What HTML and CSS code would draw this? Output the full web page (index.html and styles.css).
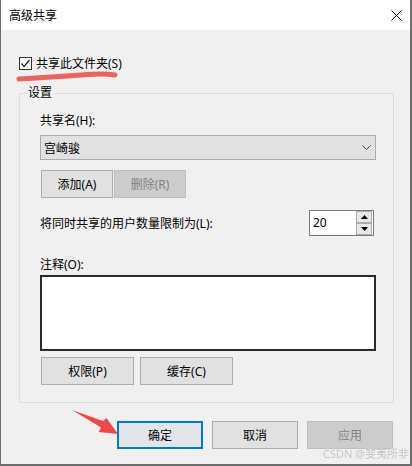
FILE: index.html
```html
<!DOCTYPE html>
<html>
<head>
  <title>高级共享</title>
  <meta name="viewport" content="width=device-width, initial-scale=1.0">
  <link rel="stylesheet" href="styles.css">
</head>
<body>
  <div class="window">
    <div class="titlebar">
      <span class="title">高级共享</span>
      <svg class="close" width="11" height="11" viewBox="0 0 11 11">
        <path d="M0.5 0.5 L10.5 10.5 M10.5 0.5 L0.5 10.5" stroke="#000" stroke-width="1" fill="none"/>
      </svg>
    </div>

    <div class="content">
      <div class="share-check">
        <span class="checkbox">
          <svg width="11" height="11" viewBox="0 0 11 11">
            <polyline points="1.5,5.5 4,8.5 9.5,2" stroke="#222" stroke-width="1.2" fill="none"/>
          </svg>
        </span>
        <span class="check-label">共享此文件夹(S)</span>
      </div>

      <div class="group">
        <span class="legend">设置</span>

        <div class="label">共享名(H):</div>
        <div class="combo">
          <span>宫崎骏</span>
          <svg width="9" height="5" viewBox="0 0 9 5">
            <polyline points="0.5,0.5 4.5,4.5 8.5,0.5" stroke="#444" stroke-width="1" fill="none"/>
          </svg>
        </div>

        <div class="btn-row">
          <button class="btn small">添加(A)</button>
          <button class="btn small disabled">删除(R)</button>
        </div>

        <div class="limit-row">
          <span>将同时共享的用户数量限制为(L):</span>
          <div class="spin">
            <span class="spin-value">20</span>
            <div class="spin-buttons">
              <span class="spin-btn">
                <svg width="7" height="4" viewBox="0 0 7 4"><polygon points="3.5,0 7,4 0,4" fill="#000"/></svg>
              </span>
              <span class="spin-btn">
                <svg width="7" height="4" viewBox="0 0 7 4"><polygon points="0,0 7,0 3.5,4" fill="#000"/></svg>
              </span>
            </div>
          </div>
        </div>

        <div class="label comment-label">注释(O):</div>
        <div class="comment-box"></div>

        <div class="btn-row wide">
          <button class="btn medium">权限(P)</button>
          <button class="btn medium">缓存(C)</button>
        </div>
      </div>

      <div class="dialog-buttons">
        <button class="btn dialog default">确定</button>
        <button class="btn dialog">取消</button>
        <button class="btn dialog disabled">应用</button>
      </div>
    </div>

    <!-- red hand-drawn marks on top of the screenshot -->
    <svg class="marks" width="412" height="466" viewBox="0 0 412 466">
      <path d="M19 79 Q55 77 88 74.5 Q105 73.5 115 75" stroke="#f0605f" stroke-width="5" stroke-linecap="round" fill="none"/>
      <polygon points="72,410 103,421 106.5,418 118,434 98.5,432 101,427.5" fill="#ef4a4a"/>
    </svg>

    <span class="watermark">CSDN @斐夷所非</span>
  </div>
</body>
</html>
```

FILE: styles.css
```css
* {
  box-sizing: border-box;
  margin: 0;
  padding: 0;
}

body {
  background-color: #f0f0f0;
  font-family: "Noto Sans", "Noto Sans CJK SC", sans-serif;
  font-size: 12px;
  color: #000;
}

.window {
  position: relative;
  width: 412px;
  height: 466px;
  background-color: #f0f0f0;
  border-left: 1px solid #6e6e6e;
  border-right: 2px solid #6e6e6e;
  border-bottom: 2px solid #6e6e6e;
  overflow: hidden;
}

.titlebar {
  height: 30px;
  background-color: #fff;
  display: flex;
  align-items: center;
  justify-content: space-between;
  padding: 0 8px 0 8px;
}

.title {
  line-height: 16px;
  margin-top: 1px;
}

.close {
  display: block;
  margin-top: 1px;
}

.content {
  padding: 0 16px 0 18px;
  display: flex;
  flex-direction: column;
}

/* Share checkbox */
.share-check {
  display: flex;
  align-items: flex-start;
  height: 13px;
  margin-top: 27px;
  gap: 4px;
}

.checkbox {
  width: 13px;
  height: 13px;
  border: 1px solid #333;
  background-color: #fff;
  display: flex;
  align-items: center;
  justify-content: center;
}

.checkbox svg {
  display: block;
}

.check-label {
  line-height: 13px;
}

/* Settings group box */
.group {
  margin-top: 23px;
  width: 375px;
  border: 1px solid #dcdcdc;
  padding: 0 17px 17px 20px;
  display: flex;
  flex-direction: column;
}

.legend {
  align-self: flex-start;
  line-height: 16px;
  margin: -9px 0 0 -14px;
  padding: 0 2px;
  background-color: #f0f0f0;
}

.label {
  line-height: 16px;
  margin-top: 12px;
}

.combo {
  margin-top: 6px;
  height: 25px;
  background-color: #e1e1e1;
  border: 1px solid #adadad;
  display: flex;
  align-items: center;
  justify-content: space-between;
  padding: 0 4px 0 3px;
}

.combo svg {
  display: block;
}

.btn {
  font-family: "Noto Sans", "Noto Sans CJK SC", sans-serif;
  font-size: 12px;
  color: #000;
  height: 28px;
  background-color: #e1e1e1;
  border: 1px solid #adadad;
}

.btn.disabled {
  background-color: #cccccc;
  border-color: #bfbfbf;
  color: #838383;
}

.btn-row {
  display: flex;
  gap: 1px;
  margin-top: 10px;
  margin-left: 1px;
}

.btn.small {
  width: 72px;
}

.btn-row.wide {
  gap: 6px;
  margin-top: 6px;
}

.btn.medium {
  width: 93px;
}

.limit-row {
  margin-top: 12px;
  display: flex;
  align-items: center;
  justify-content: space-between;
}

.spin {
  width: 65px;
  height: 26px;
  margin-right: 2px;
  border: 1px solid #7a7a7a;
  background-color: #fff;
  display: flex;
}

.spin-value {
  flex: 1;
  line-height: 24px;
  padding-left: 3px;
}

.spin-buttons {
  display: flex;
  flex-direction: column;
  width: 17px;
  padding-right: 1px;
}

.spin-btn {
  height: 12px;
  background-color: #e8e8e8;
  border: 1px solid #adadad;
  display: flex;
  align-items: center;
  justify-content: center;
}

.spin-btn svg {
  display: block;
}

.comment-label {
  margin-top: 21px;
}

.comment-box {
  margin-top: 2px;
  height: 76px;
  background-color: #fff;
  border: 2px solid #2a2a2a;
}

/* Dialog buttons */
.dialog-buttons {
  display: flex;
  justify-content: flex-end;
  gap: 9px;
  margin-top: 18px;
  margin-right: 1px;
}

.btn.dialog {
  width: 86px;
}

.btn.default {
  border: 2px solid #0078d7;
  background-color: #e3e5e8;
}

.marks {
  position: absolute;
  left: -1px;
  top: 0;
  pointer-events: none;
}

.watermark {
  position: absolute;
  right: 1px;
  bottom: 3px;
  font-size: 11px;
  line-height: 14px;
  color: #c4c4c4;
  text-shadow: 0 0 1px #fff;
}
```
